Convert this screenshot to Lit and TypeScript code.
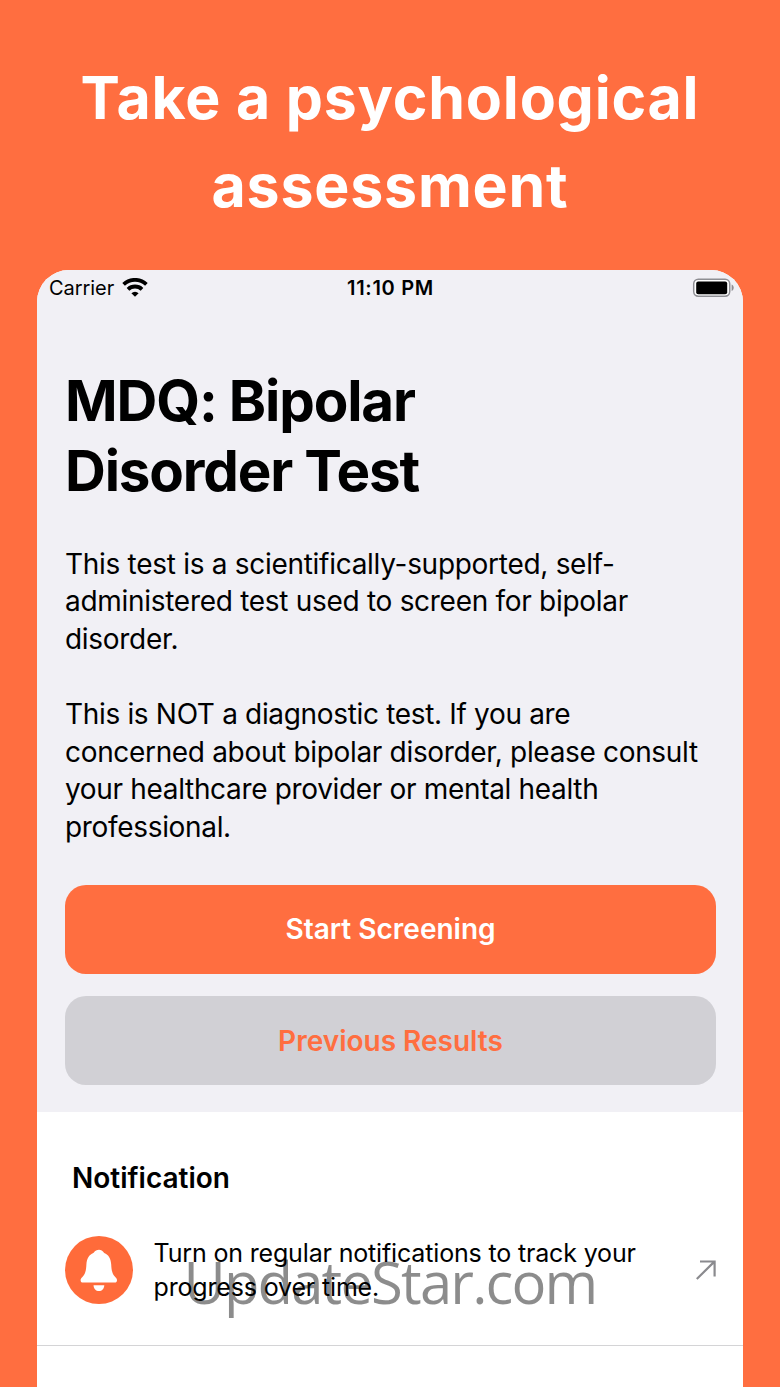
import { LitElement, html, css } from "lit";
import { customElement } from "lit/decorators.js";

@customElement("status-bar")
export class StatusBar extends LitElement {
  static styles = css`
    :host {
      display: grid;
      grid-template-columns: 1fr auto 1fr;
      align-items: center;
      height: 36px;
      padding: 0 9px 0 12px;
      font-size: 20px;
      color: #000;
    }

    .carrier {
      display: flex;
      align-items: center;
      gap: 8px;
      letter-spacing: -0.05px;
    }

    .time {
      font-weight: 600;
      letter-spacing: 0.7px;
      margin-right: 2px;
    }

    .battery {
      justify-self: end;
    }

    svg {
      display: block;
    }
  `;

  render() {
    return html`
      <div class="carrier">
        <span>Carrier</span>
        <svg width="26" height="20" viewBox="0 0 26 20">
          <g fill="none" stroke="#000" stroke-width="3.8">
            <path d="M1.6 6.4a16.5 16.5 0 0 1 22.8 0" />
            <path d="M6 11.3a10.2 10.2 0 0 1 14 0" />
          </g>
          <path d="M13 18.8l-3.6-3.6a5 5 0 0 1 7.2 0z" />
        </svg>
      </div>
      <div class="time">11:10 PM</div>
      <svg class="battery" width="42" height="20" viewBox="0 0 42 20">
        <rect x="1.7" y="1.2" width="36" height="17" rx="4.6" fill="#fff" stroke="#8e8e93" stroke-width="1.5" />
        <rect x="4.2" y="3.6" width="31" height="12.6" rx="2" />
        <path d="M39.6 6.6c2.8 1 2.8 5.400 0 6.400z" fill="#8e8e93" />
      </svg>
    `;
  }
}

@customElement("notification-row")
export class NotificationRow extends LitElement {
  static styles = css`
    :host {
      display: flex;
      align-items: center;
      height: 70px;
      padding: 0 27px 0 28px;
    }

    .icon {
      flex: none;
      width: 68px;
      height: 68px;
    }

    .text {
      flex: 1;
      margin: 0 0 0 20.5px;
      font-size: 25px;
      line-height: 34px;
      letter-spacing: -0.16px;
      white-space: nowrap;
    }

    .arrow {
      flex: none;
    }
  `;

  render() {
    return html`
      <svg class="icon" viewBox="0 0 68 68">
        <circle cx="34" cy="34" r="34" fill="#ff6b3a" />
        <path
          fill="#fff"
          d="M34 13.8c2 0 3.600 1 5.200 3.200 4.400 1.800 6.700 5.600 7 11.500.3 6.500 1.200 9.500 4 12.500 1.100 1.200 1.800 2 1.800 3.200 0 1.400-.9 2.300-2.200 2.300H17.800c-1.300 0-2.200-.9-2.200-2.300 0-1.200.7-2 1.800-3.200 2.800-3 3.700-6 4-12.500.3-5.900 2.600-9.700 7-11.500 1.600-2.200 3.600-3.200 5.600-3.200z"
        />
        <path fill="#fff" d="M28.5 49.200h10.800c-.3 3.700-2.400 5.800-5.400 5.800s-5.100-2.100-5.400-5.800z" />
      </svg>
      <p class="text">Turn on regular notifications to track your<br />progress over time.</p>
      <svg class="arrow" width="20" height="20" viewBox="0 0 20 20">
        <path d="M.8 19L18.600 1.400M4 1.500h14.600v14.900" fill="none" stroke="#8a8a8e" stroke-width="2.2" />
      </svg>
    `;
  }
}

@customElement("app-root")
export class AppRoot extends LitElement {
  static styles = css`
    :host {
      display: flex;
      flex-direction: column;
      box-sizing: border-box;
      height: 1387px;
      padding: 0 37px;
      overflow: hidden;
      position: relative;
      background: #ff6e40;
      font-family: Inter, "Liberation Sans", sans-serif;
      color: #000;
    }

    .headline {
      margin: 0 -37px;
      padding-top: 54px;
      height: 216px;
      text-align: center;
      color: #fff;
      font-size: 59px;
      font-weight: 700;
      line-height: 88px;
      letter-spacing: 0.8px;
    }

    .phone {
      flex: 1;
      display: flex;
      flex-direction: column;
      border-radius: 32px 32px 0 0;
      overflow: hidden;
      background: #fff;
    }

    .intro {
      height: 842px;
      background: #f1f0f5;
    }

    .body {
      padding: 60px 27px 0 28px;
    }

    .title {
      margin: 0;
      font-size: 56.5px;
      font-weight: 700;
      line-height: 69.5px;
      letter-spacing: -1.15px;
    }

    .copy {
      margin: 40.5px 0 38px;
      font-size: 28px;
      line-height: 37.6px;
      letter-spacing: -0.29px;
      white-space: nowrap;
    }

    .copy + .copy {
      letter-spacing: -0.33px;
    }

    .button {
      display: block;
      width: 100%;
      height: 89px;
      padding: 0;
      border: none;
      border-radius: 21px;
      background: #ff6e40;
      color: #fff;
      font: 600 28px Inter, "Liberation Sans", sans-serif;
    }

    .button.secondary {
      margin-top: 22.5px;
      background: #d1d0d5;
      color: #ff6e40;
    }

    .copy + .copy {
      margin-top: 38px;
    }

    .section {
      margin: 0;
      padding: 48px 35px 0;
      font-size: 28px;
      font-weight: 600;
      line-height: 36px;
    }

    .row {
      margin-top: 39px;
      padding-bottom: 40px;
      border-bottom: 1px solid #d4d4d6;
    }

    .watermark {
      position: absolute;
      left: 183.5px;
      top: 1242px;
      font-family: "Open Sans", "Noto Sans", sans-serif;
      font-size: 58px;
      line-height: 80px;
      letter-spacing: -1.85px;
      color: rgba(0, 0, 0, 0.45);
      white-space: nowrap;
    }
  `;

  render() {
    return html`
      <div class="headline">Take a psychological<br />assessment</div>
      <div class="phone">
        <div class="intro">
          <status-bar></status-bar>
          <div class="body">
            <h1 class="title">MDQ: Bipolar<br />Disorder Test</h1>
            <p class="copy">
              This test is a scientifically-supported, self-<br />administered test used to screen for bipolar<br />disorder.
            </p>
            <p class="copy">
              This is NOT a diagnostic test. If you are<br />concerned about bipolar disorder, please consult<br />your healthcare provider or mental health<br />professional.
            </p>
            <button class="button">Start Screening</button>
            <button class="button secondary">Previous Results</button>
          </div>
        </div>
        <h2 class="section">Notification</h2>
        <div class="row"><notification-row></notification-row></div>
      </div>
      <div class="watermark">UpdateStar.com</div>
    `;
  }
}
